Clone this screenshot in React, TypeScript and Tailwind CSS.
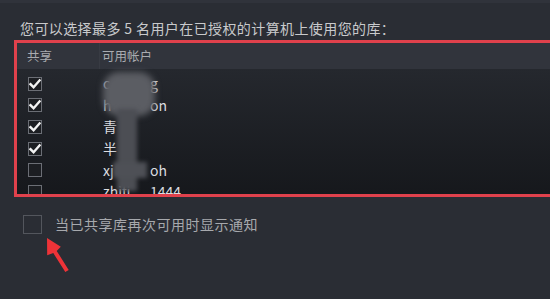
import React from "react";

const Check = ({ checked }: { checked: boolean }) => (
  <div className="w-[14px] h-[14px] border border-[#6b6e75] bg-[#1c1e22] flex items-center justify-center">
    {checked && (
      <svg width="12" height="12" viewBox="0 0 12 12">
        <path d="M1.5 6.2 L4.6 9.3 L10.6 2.4" stroke="#f2f2f2" strokeWidth="2.4" fill="none" strokeLinecap="square" />
      </svg>
    )}
  </div>
);

const rows: { checked: boolean; pre: string; post: string }[] = [
  { checked: true, pre: "c", post: "g" },
  { checked: true, pre: "h", post: "on" },
  { checked: true, pre: "青", post: "" },
  { checked: true, pre: "半", post: "" },
  { checked: false, pre: "xj", post: "oh" },
  { checked: false, pre: "zhifi", post: "1444" },
];

export default function App() {
  return (
    <div
      className="w-[550px] h-[299px] bg-[#2a2d34] overflow-hidden relative"
      style={{ fontFamily: '"Noto Sans CJK SC", "Noto Sans", sans-serif' }}
    >
      <div className="h-[3px] bg-[#30333b]" />
      <div className="pl-[20px] pt-[16px] text-[14px] leading-[18px] tracking-[0.4px] text-[#c9cacc]">
        您可以选择最多 5 名用户在已授权的计算机上使用您的库：
      </div>
      <div className="mt-[3px] ml-[14px] h-[157px] border-[3px] border-r-0 border-[#e0414c] flex flex-col overflow-hidden">
        <div className="h-[26px] bg-[#31343c] grid grid-cols-[83px_1fr] items-center text-[12.5px] text-[#a9abb0] shrink-0">
          <div className="pl-[10px] h-full flex items-center border-r border-[#383b43]">共享</div>
          <div className="pl-[2px]">可用帐户</div>
        </div>
        <div className="flex-1 bg-gradient-to-b from-[#25282e] to-[#15171b] pt-[4px] relative">
          {rows.map((r, i) => (
            <div key={i} className="h-[21.6px] grid grid-cols-[83px_1fr] items-center">
              <div className="pl-[11px]">
                <Check checked={r.checked} />
              </div>
              <div className="pl-[3px] text-[14px] text-[#dcdde0] flex items-center">
                <span className="inline-block w-[47px]">{r.pre}</span>
                <span>{r.post}</span>
              </div>
            </div>
          ))}
          <div className="absolute left-[86px] top-[3px] w-[52px] h-[44px] rounded-[16px] bg-[#5b5d63] blur-[3px]" />
          <div className="absolute left-[100px] top-[40px] w-[20px] h-[82px] bg-[#4c4e54] blur-[2px]" />
          <div className="absolute left-[96px] top-[93px] w-[34px] h-[16px] bg-[#4e5056] blur-[2px]" />
        </div>
      </div>
      <div className="mt-[17px] ml-[23px] flex items-center">
        <div className="w-[19px] h-[19px] border border-[#53565d]" />
        <div className="ml-[13px] text-[14px] tracking-[0.5px] text-[#a7a9ad]">当已共享库再次可用时显示通知</div>
      </div>
      <svg className="absolute left-[40px] top-[230px]" width="34" height="46" viewBox="0 0 34 46">
        <path d="M7 8 L20.8 16.8 L16.7 20.9 L28.7 39.9 L25.3 42.1 L13.3 23.1 L7.2 25.2 Z" fill="#ee3338" />
      </svg>
    </div>
  );
}
